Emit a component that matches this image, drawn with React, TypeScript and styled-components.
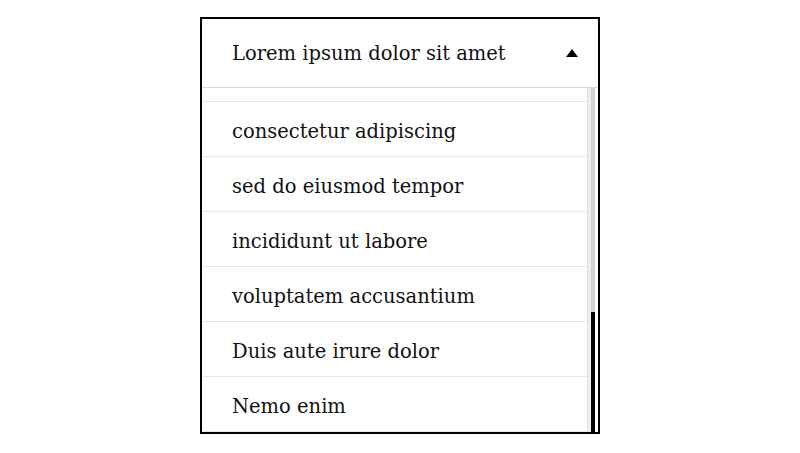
import React, { useEffect, useRef, useState } from 'react';
import styled, { createGlobalStyle } from 'styled-components';

const OPTIONS = [
  'Lorem ipsum dolor sit amet',
  'Ut enim ad minim',
  'quis nostrud exercitation',
  'ullamco laboris nisi',
  'ut aliquip ex ea',
  'commodo consequat',
  'Excepteur sint occaecat',
  'cupidatat non proident',
  'sunt in culpa qui',
  'officia deserunt mollit',
  'anim id est laborum',
  'Sed ut perspiciatis',
  'consectetur adipiscing',
  'sed do eiusmod tempor',
  'incididunt ut labore',
  'voluptatem accusantium',
  'Duis aute irure dolor',
  'Nemo enim',
];

const GlobalStyle = createGlobalStyle`
  html, body {
    margin: 0;
    padding: 0;
    background: #fff;
  }
  body {
    font-family: "DejaVu Serif", "Liberation Serif", serif;
    color: #111;
  }
`;

const Page = styled.div`
  width: 800px;
  height: 453px;
  display: flex;
  justify-content: center;
  padding-top: 17px;
  box-sizing: border-box;
`;

const Select = styled.div`
  width: 400px;
  height: 417px;
  border: 2px solid #000;
  box-sizing: border-box;
  display: flex;
  flex-direction: column;
  background: #fff;
`;

const Header = styled.div`
  height: 69px;
  flex: 0 0 69px;
  display: flex;
  align-items: center;
  justify-content: space-between;
  padding: 1px 20px 0 30px;
  border-bottom: 1px solid #d8d8d8;
  box-sizing: border-box;
  font-size: 19.5px;
`;

const Caret = styled.span`
  width: 0;
  height: 0;
  border-left: 6px solid transparent;
  border-right: 6px solid transparent;
  border-bottom: 8px solid #000;
  margin-top: -2px;
`;

const ListWrap = styled.div`
  flex: 1;
  min-height: 0;
  padding-right: 3px;
  display: flex;
`;

const List = styled.ul`
  flex: 1;
  margin: 0;
  padding: 0;
  list-style: none;
  overflow-y: scroll;
  scrollbar-width: none;

  &::-webkit-scrollbar {
    display: none;
  }
`;

const Option = styled.li`
  height: 55px;
  box-sizing: border-box;
  border-bottom: 1px solid #e6e6e6;
  display: flex;
  align-items: center;
  padding: 4px 0 0 30px;
  font-size: 19.5px;
  cursor: pointer;
`;

const Track = styled.div`
  flex: 0 0 8px;
  position: relative;
  background: linear-gradient(to right, #e0e0e0 0 1px, #eeeeee 1px 4px, #d2d2d2 4px 8px);
`;

const Thumb = styled.div`
  position: absolute;
  left: 4px;
  right: 0;
  background: #000;
`;

export default function App() {
  const listRef = useRef<HTMLUListElement>(null);
  const [thumb, setThumb] = useState({ top: 0, height: 0 });

  useEffect(() => {
    const el = listRef.current;
    if (!el) return;
    const update = () => {
      const ratio = el.clientHeight / el.scrollHeight;
      setThumb({
        top: el.scrollTop * ratio,
        height: el.clientHeight * ratio,
      });
    };
    el.scrollTop = el.scrollHeight;
    update();
    el.addEventListener('scroll', update);
    return () => el.removeEventListener('scroll', update);
  }, []);

  return (
    <>
      <GlobalStyle />
      <Page>
        <Select>
          <Header>
            {OPTIONS[0]}
            <Caret />
          </Header>
          <ListWrap>
            <List ref={listRef}>
              {OPTIONS.map(o => (
                <Option key={o}>{o}</Option>
              ))}
            </List>
            <Track>
              <Thumb style={{ top: thumb.top, height: thumb.height }} />
            </Track>
          </ListWrap>
        </Select>
      </Page>
    </>
  );
}
